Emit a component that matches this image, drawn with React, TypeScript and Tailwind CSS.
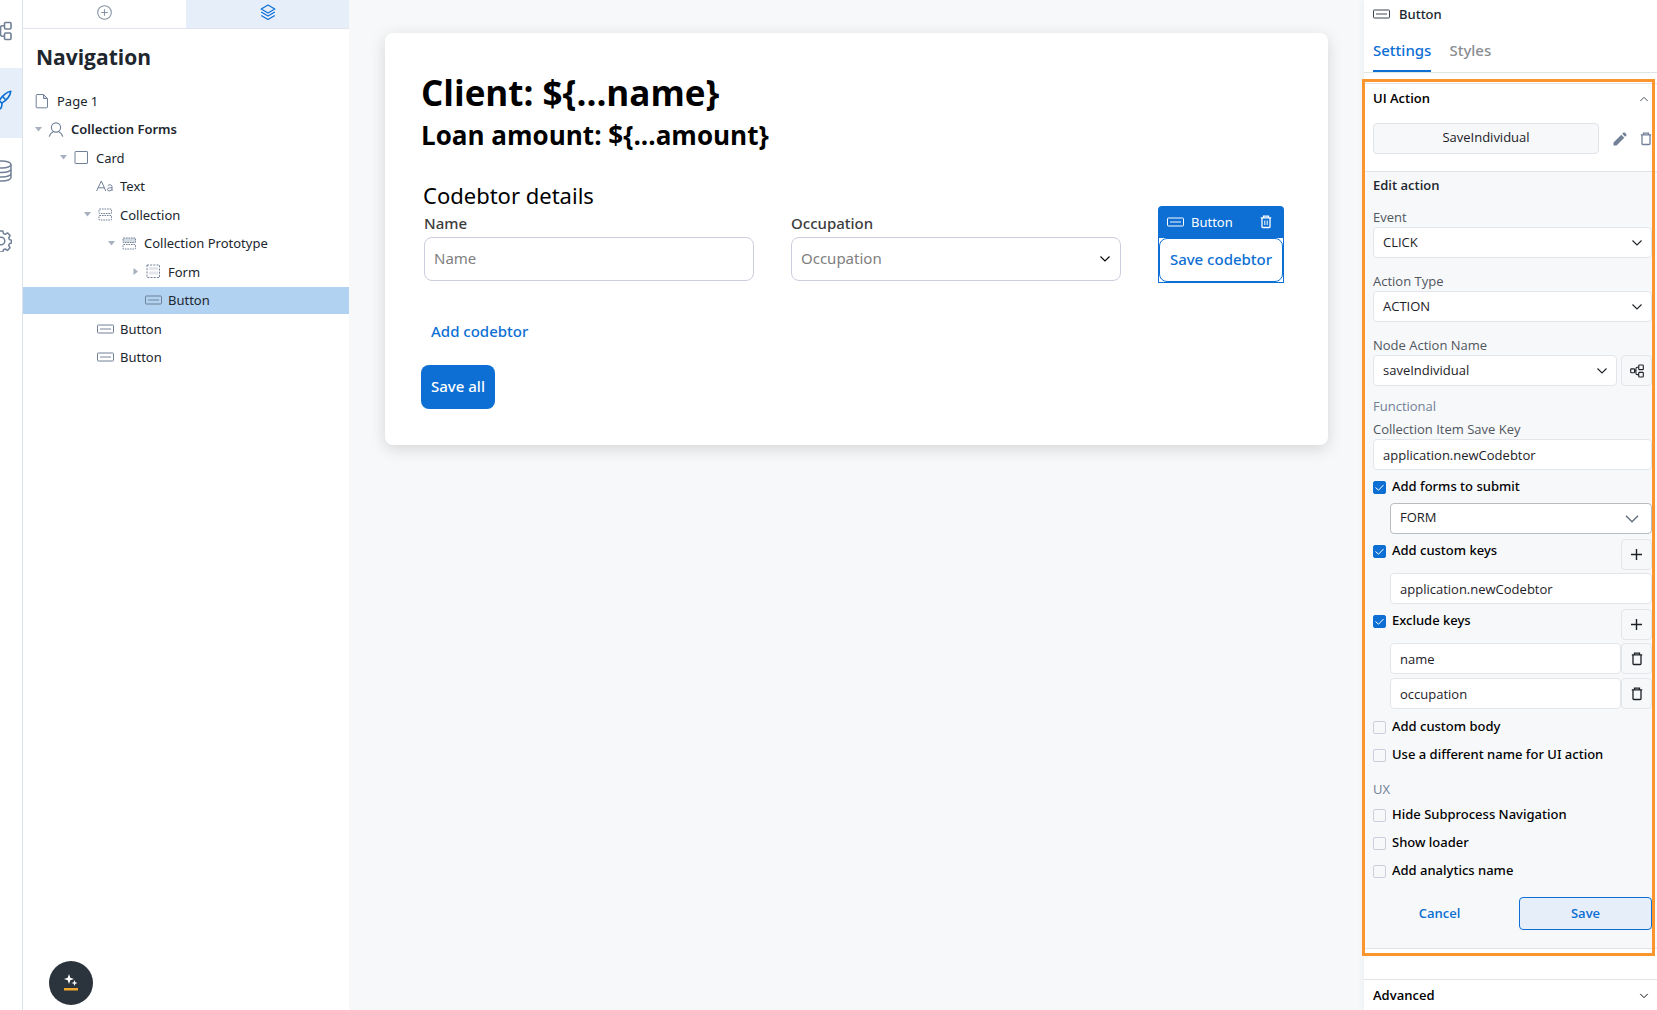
import { useState } from "react";
import type { ReactNode } from "react";

type IconProps = { className?: string };

function ButtonIcon({ className = "" }: IconProps) {
    return (
        <svg width="17" height="10" viewBox="0 0 17 10" fill="none" stroke="currentColor" className={`shrink-0 ${className}`}>
            <rect x="0.5" y="1" width="16" height="8" rx="0.8" />
            <path d="M3 5h11" strokeWidth="1.6" opacity="0.6" />
        </svg>
    );
}

function PageIcon() {
    return (
        <svg width="14" height="16" viewBox="0 0 14 16" fill="none" stroke="currentColor" className="shrink-0">
            <path d="M2 1.5h6.5L12.500 5.500V14a.8.8 0 0 1-.8.8H2a.8.8 0 0 1-.8-.8V2.300a.8.8 0 0 1 .8-.8Z" />
            <path d="M8.500 1.500v4h4" fill="currentColor" fillOpacity="0.25" />
        </svg>
    );
}

function UserIcon() {
    return (
        <svg width="16" height="15" viewBox="0 0 16 15" fill="none" stroke="currentColor" strokeWidth="1.1" className="shrink-0">
            <circle cx="8" cy="5.500" r="4.600" />
            <path d="M1.300 14.200c.8-2.200 2.200-3.900 4.200-4.700M14.700 14.200c-.8-2.200-2.200-3.900-4.200-4.700" strokeLinecap="round" />
        </svg>
    );
}

function CardIcon() {
    return (
        <svg width="15" height="15" viewBox="0 0 15 15" fill="none" stroke="currentColor" className="shrink-0">
            <rect x="1" y="1.500" width="12.500" height="12" rx="0.5" />
        </svg>
    );
}

function TextIcon() {
    return (
        <svg width="18" height="12" viewBox="0 0 18 12" fill="none" stroke="currentColor" className="shrink-0">
            <path d="M.6 11 5.300 1l4.500 10M2.200 7.800h6.200" />
            <path d="M11.800 5.600c1-1.200 4.200-1.200 4.200.9V11M16 7.800c-2-.2-4.500 0-4.500 1.700 0 2 3.600 1.800 4.500-.3" />
        </svg>
    );
}

function CollectionIcon({ filled }: { filled?: boolean }) {
    return (
        <svg width="15" height="13" viewBox="0 0 15 13" fill="none" stroke="currentColor" strokeDasharray="1.600 0.900" className="shrink-0">
            <rect x="1" y="1" width="12.500" height="4.500" rx="0.5" fill={filled ? "#d5dbe3" : "none"} />
            <rect x="1" y="7.500" width="12.500" height="4.500" rx="0.5" />
        </svg>
    );
}

function FormIcon() {
    return (
        <svg width="15" height="15" viewBox="0 0 15 15" fill="none" stroke="currentColor" className="shrink-0">
            <rect x="1" y="1" width="12.500" height="12.500" strokeDasharray="2 1.200" />
            <path d="M3 4.500h9M3 9h9" strokeWidth="3" opacity="0.2" />
        </svg>
    );
}

function Chevron({ className = "", size = 12, up }: IconProps & { size?: number; up?: boolean }) {
    return (
        <svg width={size} height={size} viewBox="0 0 12 12" fill="none" stroke="currentColor" strokeWidth="1.1" className={`pointer-events-none ${className}`}>
            <path d={up ? "M1.500 8.500 6 4l4.500 4.500" : "M1.500 3.500 6 8l4.500-4.500"} />
        </svg>
    );
}

function TrashIcon({ className = "", lines }: IconProps & { lines?: boolean }) {
    return (
        <svg width="12" height="14" viewBox="0 0 12 14" fill="none" stroke="currentColor" strokeWidth="1.3" className={`shrink-0 ${className}`}>
            <path d="M.8 2.800h10.400M3.500 2.500V1.200h5v1.300M2 3v8.700c0 .5.300.8.800.8h6.400c.5 0 .8-.3.800-.8V3" />
            {lines && <path d="M4.800 5.500v4.500M7.200 5.500v4.500" strokeWidth="1" />}
        </svg>
    );
}

function FlowIcon({ size = 20, className = "" }: IconProps & { size?: number }) {
    return (
        <svg width={size} height={size} viewBox="0 0 20 20" fill="none" stroke="currentColor" strokeWidth="1.6" className={`shrink-0 ${className}`}>
            <rect x="1" y="7" width="5.500" height="5.500" rx="1" />
            <rect x="12.500" y="1.500" width="6.500" height="6.500" rx="1" />
            <rect x="12.500" y="12" width="6.500" height="6.500" rx="1" />
            <path d="M6.500 9.700h2M12.500 4.700h-2q-2 0-2 2v6.500q0 2 2 2h2" />
        </svg>
    );
}

function BrushIcon() {
    return (
        <svg width="24" height="22" viewBox="0 0 24 22" fill="none" stroke="currentColor" strokeWidth="1.6" strokeLinejoin="round" className="shrink-0">
            <path d="M22.800 1.200c-3.500.3-9 4.800-11.600 9.500l2.600 2.400c4.600-2.600 8.500-7.500 9-11.900Z" />
            <path d="M14.500 6.500l3 3M11.200 10.700c-4-.3-4.500 3-5 5.200-.4 1.900-1.900 2.600-3.700 2.800 4.500 3.200 12.400 2.200 11.300-5.600" />
        </svg>
    );
}

function DatabaseIcon() {
    return (
        <svg width="20" height="22" viewBox="0 0 20 22" fill="none" stroke="currentColor" strokeWidth="1.500" className="shrink-0">
            <ellipse cx="10" cy="4.500" rx="9" ry="3.500" />
            <path d="M1 4.500v13c0 2 4 3.500 9 3.500s9-1.500 9-3.500v-13M1 9c0 2 4 3.500 9 3.500S19 11 19 9M1 13.500c0 2 4 3.500 9 3.500s9-1.500 9-3.500" />
        </svg>
    );
}

function GearIcon() {
    return (
        <svg width="22" height="22" viewBox="0 0 22 22" fill="none" stroke="currentColor" strokeWidth="1.500" strokeLinejoin="round" className="shrink-0">
            <circle cx="11" cy="11" r="3.800" />
            <path d="M9.200 1h3.600l.7 2.600 1.700.7 2.300-1.400 2.600 2.600-1.400 2.300.7 1.700 1.900.6v3l-1.900.7-.7 1.700 1.400 2.300-2.600 2.600-2.300-1.400-1.700.7-.7 2.300H9.200l-.7-2.300-1.700-.7-2.300 1.400-2.600-2.600 1.400-2.300-.7-1.700L1 12.800V9.200l1.600-.7.7-1.700-1.400-2.300 2.600-2.600 2.300 1.400 1.700-.7Z" />
        </svg>
    );
}

function LayersIcon() {
    return (
        <svg width="16" height="17" viewBox="0 0 16 17" fill="none" stroke="currentColor" strokeWidth="1.200" strokeLinejoin="round">
            <path d="M8 1 14.800 5 8 9 1.200 5Z" />
            <path d="M1.200 8 8 12l6.800-4M1.200 11.500 8 15.500l6.800-4" />
        </svg>
    );
}

const railItems = [
    { key: "Processes", icon: <FlowIcon /> },
    { key: "Design", icon: <BrushIcon /> },
    { key: "Data", icon: <DatabaseIcon /> },
    { key: "Preferences", icon: <GearIcon /> },
];

type TreeItem = {
    label: string;
    icon: ReactNode;
    indent: string;
    caret?: "open" | "closed";
    strong?: boolean;
    active?: boolean;
};

const treeItems: TreeItem[] = [
    { label: "Page 1", icon: <PageIcon />, indent: "-ml-[3px]" },
    { label: "Collection Forms", icon: <UserIcon />, indent: "pl-[11px]", caret: "open", strong: true },
    { label: "Card", icon: <CardIcon />, indent: "pl-9", caret: "open" },
    { label: "Text", icon: <TextIcon />, indent: "pl-[60px]" },
    { label: "Collection", icon: <CollectionIcon />, indent: "pl-[60px]", caret: "open" },
    { label: "Collection Prototype", icon: <CollectionIcon filled />, indent: "pl-[84px]", caret: "open" },
    { label: "Form", icon: <FormIcon />, indent: "pl-[108px]", caret: "closed" },
    { label: "Button", icon: <ButtonIcon />, indent: "pl-[108px]", active: true },
    { label: "Button", icon: <ButtonIcon />, indent: "pl-[60px]" },
    { label: "Button", icon: <ButtonIcon />, indent: "pl-[60px]" },
];

function TreeRow({ item }: { item: TreeItem }) {
    return (
        <li>
            <button
                className={`flex h-[27px] w-full items-center text-left font-['Noto_Sans',sans-serif] text-[13px] leading-5 ${item.indent} ${
                    item.active ? "bg-[#b1d2f1]" : ""
                } ${item.strong ? "font-semibold" : ""}`}
            >
                <span className="flex w-2 shrink-0 justify-center text-[#a6b0bf]">
                    {item.caret && (
                        <svg width="7" height="7" viewBox="0 0 7 7" fill="currentColor" className="shrink-0">
                            <path d={item.caret === "open" ? "M0 1h7L3.500 5.500Z" : "M1.500 0v7L6 3.500Z"} />
                        </svg>
                    )}
                </span>
                <span className="mr-px flex w-7 shrink-0 justify-center text-[#718096]">{item.icon}</span>
                {item.label}
            </button>
        </li>
    );
}

function Navigation() {
    return (
        <aside className="w-[326px] shrink-0 bg-white">
            <div className="grid h-[29px] grid-cols-2 border-b border-[#e0e6ec]">
                <button aria-label="Add" className="flex items-center justify-center pb-1 text-[#8794a5]">
                    <svg width="15" height="15" viewBox="0 0 15 15" fill="none" stroke="currentColor" strokeWidth="1.100">
                        <circle cx="7.500" cy="7.500" r="6.800" />
                        <path d="M7.500 4.200v6.600M4.200 7.500h6.600" />
                    </svg>
                </button>
                <button aria-label="Layers" className="flex items-center justify-center bg-[#e6eefa] pb-1 text-[#0d6fd3]">
                    <LayersIcon />
                </button>
            </div>
            <h2 className="px-[13px] pt-3 text-[21px] leading-8 font-bold">Navigation</h2>
            <ul className="mt-[14px] flex h-[284px] flex-col justify-between">
                {treeItems.map((item, i) => (
                    <TreeRow key={i} item={item} />
                ))}
            </ul>
        </aside>
    );
}

function Canvas() {
    return (
        <main className="min-w-0 flex-1 bg-[#f7f8fa] px-9 pt-[33px] font-['Noto_Sans',sans-serif]">
            <section className="rounded-lg bg-white pt-9 pr-11 pb-9 pl-9 text-black shadow-[0_4px_16px_rgba(0,0,0,0.14)]">
                <h1 className="font-['Open_Sans',sans-serif] text-[35px] leading-[48px] font-bold">{"Client: ${...name}"}</h1>
                <h2 className="font-['Open_Sans',sans-serif] text-[26px] leading-[36px] font-bold">{"Loan amount: ${...amount}"}</h2>
                <h3 className="mt-[26px] ml-[2px] text-[22px] leading-8">Codebtor details</h3>
                <form className="ml-[3px] flex items-start gap-[37px]">
                    <label className="min-w-0 flex-1 text-[15px] leading-6 text-[#3c3c3c]">
                        <span className="font-medium">Name</span>
                        <input
                            placeholder="Name"
                            className="mt-[2px] block h-11 w-full rounded-lg border border-[#cbcfdd] px-[9px] pb-[2px] placeholder:text-[#808080]"
                        />
                    </label>
                    <label className="min-w-0 flex-1 text-[15px] leading-6 text-[#3c3c3c]">
                        <span className="font-medium">Occupation</span>
                        <span className="relative mt-[2px] block">
                            <select className="block h-11 w-full appearance-none rounded-lg border border-[#cbcfdd] px-[9px] pb-[2px] text-[#808080]">
                                <option>Occupation</option>
                            </select>
                            <Chevron className="absolute top-4 right-[10px] text-black" />
                        </span>
                    </label>
                    <div className="relative mt-[26px] w-[126px] shrink-0 border border-[#0d6fd3]">
                        <div className="absolute -inset-x-px bottom-full flex h-8 items-center rounded-t bg-[#0d6fd3] px-[9px] text-white">
                            <ButtonIcon />
                            <span className="ml-[7px] flex-1 text-[13px] leading-5">Button</span>
                            <button type="button" aria-label="Delete button" className="mr-[3px]">
                                <TrashIcon lines />
                            </button>
                        </div>
                        <button
                            type="button"
                            className="block h-11 w-full rounded-lg border border-[#0d6fd3] pb-[2px] text-[15px] font-medium whitespace-nowrap text-[#0d6fd3]"
                        >
                            Save codebtor
                        </button>
                    </div>
                </form>
                <button className="mt-[27px] block h-11 px-[10px] pb-[2px] text-[15px] font-medium text-[#0d6fd3]">Add codebtor</button>
                <button className="mt-[11px] block h-11 rounded-lg bg-[#0d6fd3] px-[10px] pb-[2px] text-[15px] font-medium text-white">
                    Save all
                </button>
            </section>
        </main>
    );
}

function Field({ label, children }: { label: string; children: ReactNode }) {
    return (
        <label className="block leading-5 text-[#50565e]">
            {label}
            {children}
        </label>
    );
}

function Select({ value, strong }: { value: string; strong?: boolean }) {
    return (
        <span className="relative block flex-1">
            <select
                aria-label={value}
                className={`block h-[31px] w-full appearance-none rounded border bg-white px-[9px] pb-px text-[#1c2127] ${
                    strong ? "border-[#b9bcc0]" : "border-[#e2e6eb]"
                }`}
            >
                <option>{value}</option>
            </select>
            {strong ? (
                <Chevron size={16} className="absolute top-2 right-3 text-[#66717f]" />
            ) : (
                <Chevron className="absolute top-[10px] right-[9px] text-[#1c2127]" />
            )}
        </span>
    );
}

function TextBox({ value, label }: { value: string; label: string }) {
    return (
        <input
            aria-label={label}
            defaultValue={value}
            className="block h-[31px] w-full min-w-0 flex-1 rounded border border-[#e2e6eb] bg-white px-[9px] text-[#1c2127]"
        />
    );
}

function SquareButton({ label, children }: { label: string; children: ReactNode }) {
    return (
        <button aria-label={label} className="flex size-[31px] shrink-0 items-center justify-center rounded border border-[#e2e6eb] text-[#1c2127]">
            {children}
        </button>
    );
}

function PlusIcon() {
    return (
        <svg width="11" height="11" viewBox="0 0 11 11" fill="none" stroke="currentColor" strokeWidth="1.400">
            <path d="M5.500 0v11M0 5.500h11" />
        </svg>
    );
}

function Check({ label, on = false }: { label: string; on?: boolean }) {
    const [checked, setChecked] = useState(on);

    return (
        <label className="flex h-5 items-center gap-[6px] font-['Noto_Sans',sans-serif] font-medium text-black">
            <span className="relative flex size-[13px] shrink-0">
                <input
                    type="checkbox"
                    checked={checked}
                    onChange={() => setChecked(!checked)}
                    className="size-[13px] appearance-none rounded-[2px] border border-[#cbcfdd] checked:border-[#0d6fd3] checked:bg-[#0d6fd3]"
                />
                {checked && (
                    <svg viewBox="0 0 13 13" fill="none" stroke="white" className="pointer-events-none absolute inset-0">
                        <path d="M2.500 6.500 5.500 9.200 10.500 4" />
                    </svg>
                )}
            </span>
            {label}
        </label>
    );
}

function EditAction() {
    return (
        <div className="border-y border-[#e0e3e8] bg-[#f7f8fa] pt-[3px] pr-[5px] pb-[18px] pl-[9px]">
            <h3 className="leading-5 font-semibold">Edit action</h3>
            <div className="mt-3 flex flex-col gap-[13px]">
                <Field label="Event">
                    <Select value="CLICK" />
                </Field>
                <Field label="Action Type">
                    <Select value="ACTION" />
                </Field>
                <Field label="Node Action Name">
                    <span className="flex gap-1">
                        <Select value="saveIndividual" />
                        <SquareButton label="Open node">
                            <FlowIcon size={14} />
                        </SquareButton>
                    </span>
                </Field>
            </div>
            <p className="mt-[10px] leading-5 text-[#718096]">Functional</p>
            <div className="mt-[3px]">
                <Field label="Collection Item Save Key">
                    <TextBox label="Collection Item Save Key" value="application.newCodebtor" />
                </Field>
            </div>
            <div className="mt-[7px]">
                <Check label="Add forms to submit" on />
            </div>
            <div className="mt-[6px] pl-[17px]">
                <Select value="FORM" strong />
            </div>
            <div className="mt-[5px] flex justify-between">
                <div className="pt-[2px]">
                    <Check label="Add custom keys" on />
                </div>
                <SquareButton label="Add custom key">
                    <PlusIcon />
                </SquareButton>
            </div>
            <div className="mt-[3px] pl-[17px]">
                <TextBox label="Custom key" value="application.newCodebtor" />
            </div>
            <div className="mt-[5px] flex justify-between">
                <div className="pt-[2px]">
                    <Check label="Exclude keys" on />
                </div>
                <SquareButton label="Add excluded key">
                    <PlusIcon />
                </SquareButton>
            </div>
            <div className="mt-[3px] flex flex-col gap-1 pl-[17px]">
                {["name", "occupation"].map((key) => (
                    <div key={key} className="flex">
                        <TextBox label={`Excluded key ${key}`} value={key} />
                        <SquareButton label={`Delete ${key}`}>
                            <TrashIcon />
                        </SquareButton>
                    </div>
                ))}
            </div>
            <div className="mt-2 flex flex-col gap-2">
                <Check label="Add custom body" />
                <Check label="Use a different name for UI action" />
            </div>
            <p className="mt-[14px] leading-5 text-[#718096]">UX</p>
            <div className="mt-[6px] flex flex-col gap-2">
                <Check label="Hide Subprocess Navigation" />
                <Check label="Show loader" />
                <Check label="Add analytics name" />
            </div>
            <div className="mt-4 grid grid-cols-2 gap-[13px] font-semibold text-[#0d6fd3]">
                <button className="h-[33px]">Cancel</button>
                <button className="h-[33px] rounded border border-[#0d6fd3] bg-[#e6eefa]">Save</button>
            </div>
        </div>
    );
}

function Inspector() {
    return (
        <aside className="relative w-[293px] shrink-0 bg-white text-[13px] shadow-[0_0_8px_rgba(0,0,0,0.06)]">
            <div className="flex items-center gap-[9px] px-[9px] pt-1 font-['Noto_Sans',sans-serif] leading-5 font-medium">
                <ButtonIcon className="text-[#3c444f]" />
                Button
            </div>
            <div className="mt-[11px] flex h-[38px] gap-[18px] border-b border-[#e0e3e8] px-[9px] font-['Noto_Sans',sans-serif] text-[15px] font-medium">
                <button className="border-b-2 border-[#0d6fd3] pb-[5px] text-[#0d6fd3]">Settings</button>
                <button className="pb-[7px] text-[#8a8d91]">Styles</button>
            </div>
            <div className="mt-[10px] border-t border-[#e0e3e8]">
                <button className="flex h-[30px] w-full items-center justify-between pr-2 pl-[9px] font-semibold text-black">
                    UI Action
                    <Chevron size={10} up className="text-[#3c444f]" />
                </button>
                <div className="mt-[9px] flex items-center pr-[5px] pb-[17px] pl-[9px] text-[#718096]">
                    <button className="h-[31px] flex-1 rounded border border-[#e0e3e8] bg-[#f7f8fa] pb-[2px] text-[#1c2127]">SaveIndividual</button>
                    <button aria-label="Edit" className="ml-[14px]">
                        <svg width="14" height="14" viewBox="0 0 14 14" fill="currentColor">
                            <path d="M.5 13.500v-3L8.300 2.700l3 3L3.500 13.500ZM9.200 1.800l1-1c.5-.5 1.200-.5 1.700 0l1.300 1.300c.5.500.5 1.200 0 1.700l-1 1Z" />
                        </svg>
                    </button>
                    <button aria-label="Delete" className="ml-[13px]">
                        <TrashIcon />
                    </button>
                </div>
            </div>
            <EditAction />
            <button className="mt-[30px] flex h-[33px] w-full items-center justify-between border-t border-[#e0e3e8] pr-2 pl-[9px] font-semibold text-black">
                Advanced
                <Chevron size={10} />
            </button>
            <div className="pointer-events-none absolute top-[79px] right-[2px] -left-[2px] h-[877px] border-3 border-[#fa962d]" />
        </aside>
    );
}

export default function App() {
    return (
        <div className="flex h-screen overflow-hidden font-['Open_Sans','Noto_Sans',sans-serif] text-[#20262e]">
            <nav className="w-[23px] shrink-0 overflow-hidden border-r border-[#dde3ea] bg-white">
                <div className="-mt-[2px] flex flex-col">
                    {railItems.map(({ key, icon }) => (
                        <button
                            key={key}
                            aria-label={key}
                            className={`flex h-[70px] w-full items-center justify-end pr-[10px] pb-1 ${
                                key === "Design" ? "bg-[#e6eefa] text-[#0d6fd3]" : "text-[#718096]"
                            }`}
                        >
                            {icon}
                        </button>
                    ))}
                </div>
            </nav>
            <Navigation />
            <Canvas />
            <Inspector />
            <button
                aria-label="Assistant"
                className="fixed bottom-[5px] left-[49px] flex size-11 items-center justify-center rounded-full bg-[#2b333c]"
            >
                <svg width="16" height="18" viewBox="0 0 16 18" fill="white">
                    <path d="M6 0l1.300 3.700L11 5 7.300 6.300 6 10 4.700 6.300 1 5l3.700-1.300ZM11.500 6l.8 2.200 2.200.8-2.200.8-.8 2.200-.8-2.200-2.200-.8 2.200-.8Z" />
                    <path d="M1 14h14v2.500H1z" fill="#f0a92e" />
                </svg>
            </button>
        </div>
    );
}
